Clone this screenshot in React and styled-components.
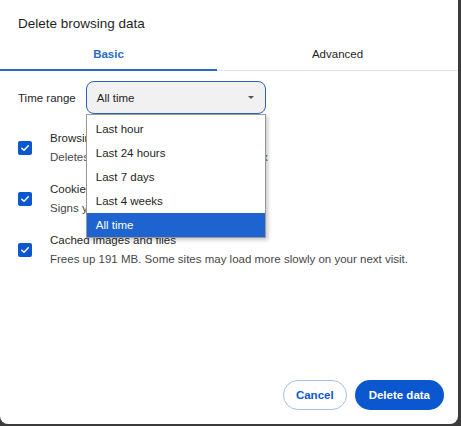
import React, { useState } from 'react'
import styled, { createGlobalStyle } from 'styled-components'

const GlobalStyle = createGlobalStyle`
  html, body {
    margin: 0;
    padding: 0;
    background: #3b3b3b;
    overflow: hidden;
  }
  body {
    font-family: 'Liberation Sans', Arial, sans-serif;
    color: #1f1f1f;
  }
`

const ranges = ['Last hour', 'Last 24 hours', 'Last 7 days', 'Last 4 weeks', 'All time']

const items = [
  { title: 'Browsing history', text: 'Deletes history, including in the search box' },
  { title: 'Cookies and other site data', text: 'Signs you out of most sites.' },
  {
    title: 'Cached images and files',
    text: 'Frees up 191 MB. Some sites may load more slowly on your next visit.',
  },
]

const CheckIcon = () => (
  <svg width='10' height='10' viewBox='0 0 10 10' fill='none'>
    <path d='M1.8 5.2 L4 7.3 L8.3 2.8' stroke='#fff' strokeWidth='1.5' strokeLinecap='round' strokeLinejoin='round' />
  </svg>
)

const App = () => {
  const [range, setRange] = useState('All time')
  const [tab, setTab] = useState('basic')

  return (
    <>
      <GlobalStyle />
      <Dialog>
        <Title>Delete browsing data</Title>
        <Tabs>
          <Tab active={tab === 'basic'} onClick={() => setTab('basic')}>Basic</Tab>
          <Tab active={tab === 'advanced'} onClick={() => setTab('advanced')}>Advanced</Tab>
        </Tabs>
        <Body>
          <RangeRow>
            <RangeLabel>Time range</RangeLabel>
            <SelectWrap>
              <Select>
                {range}
                <Caret />
              </Select>
              <Menu>
                {ranges.map(r => (
                  <Option key={r} selected={r === range} onClick={() => setRange(r)}>
                    {r}
                  </Option>
                ))}
              </Menu>
            </SelectWrap>
          </RangeRow>
          <List>
            {items.map(item => (
              <Item key={item.title}>
                <Box>
                  <CheckIcon />
                </Box>
                <ItemText>
                  <ItemTitle>{item.title}</ItemTitle>
                  <ItemSub>{item.text}</ItemSub>
                </ItemText>
              </Item>
            ))}
          </List>
        </Body>
        <Footer>
          <OutlineButton>Cancel</OutlineButton>
          <FilledButton>Delete data</FilledButton>
        </Footer>
      </Dialog>
    </>
  )
}

const Dialog = styled.div`
  display: flex;
  flex-direction: column;
  width: 458px;
  height: 424px;
  background: #fff;
  border-radius: 0 0 8px 8px;
  box-sizing: border-box;
`

const Title = styled.div`
  padding: 14px 18px 0;
  font-size: 13.5px;
  line-height: 19px;
  color: #1f1f1f;
`

const Tabs = styled.div`
  display: grid;
  grid-template-columns: 217px 1fr;
  margin-top: 4px;
  border-bottom: 1px solid #e1e3e6;
`

const Tab = styled.div`
  height: 34px;
  display: flex;
  align-items: center;
  justify-content: center;
  font-size: 11.5px;
  font-weight: ${props => (props.active ? 700 : 400)};
  color: ${props => (props.active ? '#2a6bcc' : '#1f1f1f')};
  box-shadow: ${props => (props.active ? 'inset 0 -2px 0 #2a6bc9' : 'none')};
  margin-bottom: -1px;
  cursor: pointer;
`

const Body = styled.div`
  padding: 10px 18px 0;
`

const RangeRow = styled.div`
  display: flex;
  align-items: center;
  gap: 10px;
`

const RangeLabel = styled.div`
  white-space: nowrap;
  font-size: 11.5px;
  color: #1f1f1f;
`

const SelectWrap = styled.div`
  position: relative;
  width: 180px;
`

const Select = styled.div`
  height: 33px;
  box-sizing: border-box;
  border: 1px solid #2f63b9;
  border-radius: 8px;
  background: #f1f1f1;
  display: flex;
  align-items: center;
  justify-content: space-between;
  padding: 0 10px;
  font-size: 11.5px;
  color: #1f1f1f;
`

const Caret = styled.span`
  width: 0;
  height: 0;
  border-left: 3.5px solid transparent;
  border-right: 3.5px solid transparent;
  border-top: 3.5px solid #555;
  margin-right: 1px;
`

const Menu = styled.div`
  position: absolute;
  top: 100%;
  left: 0;
  width: 180px;
  box-sizing: border-box;
  background: #fff;
  border: 1px solid #9a9a9a;
  padding: 2px 0 0;
  box-shadow: 2px 2px 4px rgba(0, 0, 0, 0.22);
  z-index: 2;
`

const Option = styled.div`
  height: 24px;
  display: flex;
  align-items: center;
  padding: 0 9px;
  font-size: 11.5px;
  color: ${props => (props.selected ? '#fff' : '#1f1f1f')};
  background: ${props => (props.selected ? '#1d64d0' : 'transparent')};
`

const List = styled.div`
  display: flex;
  flex-direction: column;
  gap: 13px;
  margin-top: 15px;
`

const Item = styled.div`
  display: flex;
  align-items: center;
`

const Box = styled.div`
  width: 14px;
  height: 14px;
  border-radius: 2px;
  background: #0b57d0;
  display: flex;
  align-items: center;
  justify-content: center;
  margin-right: 18px;
  flex-shrink: 0;
`

const ItemText = styled.div`
  display: flex;
  flex-direction: column;
`

const ItemTitle = styled.div`
  font-size: 11.5px;
  line-height: 19px;
  color: #1f1f1f;
`

const ItemSub = styled.div`
  font-size: 11.5px;
  line-height: 19px;
  color: #474747;
`

const Footer = styled.div`
  margin-top: auto;
  display: flex;
  justify-content: flex-end;
  gap: 8px;
  padding: 0 14px 14px;
`

const OutlineButton = styled.button`
  height: 30px;
  padding: 0 12px;
  border-radius: 15px;
  border: 1px solid #a8c0e8;
  background: #fff;
  color: #0b57d0;
  font-family: inherit;
  font-size: 11.5px;
  font-weight: 700;
`

const FilledButton = styled.button`
  height: 30px;
  padding: 0 14px;
  border-radius: 15px;
  border: none;
  background: #0b57d0;
  color: #fff;
  font-family: inherit;
  font-size: 11.5px;
  font-weight: 700;
`

export default App
